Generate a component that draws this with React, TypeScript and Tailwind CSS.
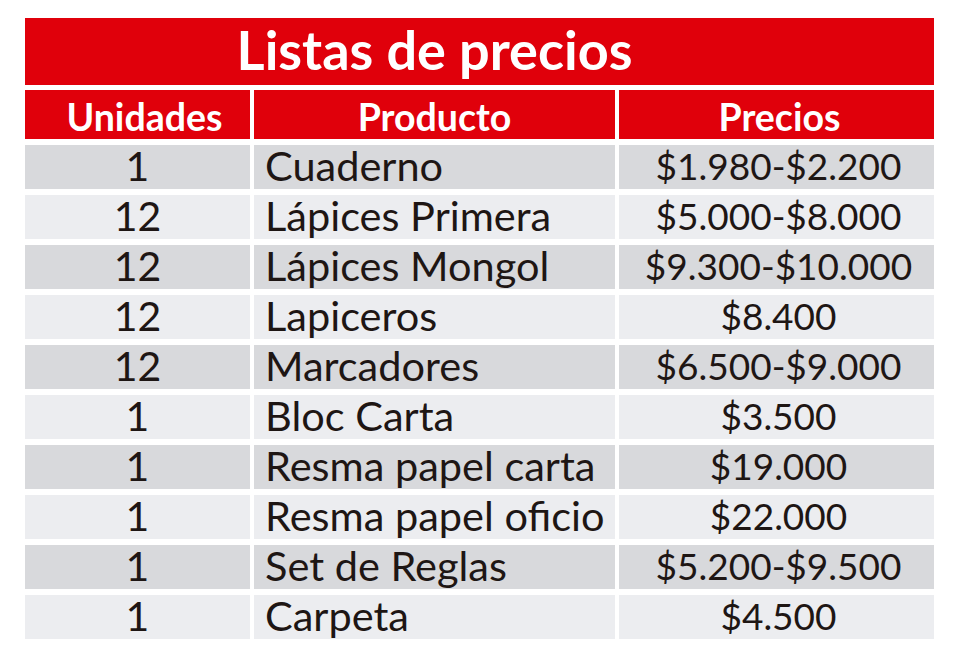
const rows: [string, string, string][] = [
  ["1", "Cuaderno", "$1.980-$2.200"],
  ["12", "Lápices Primera", "$5.000-$8.000"],
  ["12", "Lápices Mongol", "$9.300-$10.000"],
  ["12", "Lapiceros", "$8.400"],
  ["12", "Marcadores", "$6.500-$9.000"],
  ["1", "Bloc Carta", "$3.500"],
  ["1", "Resma papel carta", "$19.000"],
  ["1", "Resma papel oficio", "$22.000"],
  ["1", "Set de Reglas", "$5.200-$9.500"],
  ["1", "Carpeta", "$4.500"],
];

export default function App() {
  return (
    <div className="w-[960px] h-[657px] bg-white pt-[18px] pl-[25px] font-['Lato',sans-serif]">
      <div className="w-[909px] flex flex-col">
        {/* Title */}
        <div className="h-[67px] bg-[#e0000b] flex items-center justify-center pr-[90px] pb-[4px] text-white font-bold text-[54px] leading-none">
          Listas de precios
        </div>

        {/* Header */}
        <div className="mt-[5px] h-[49px] grid grid-cols-[225px_361px_315px] gap-x-[4px] text-white font-bold text-[37.5px] leading-none">
          <div className="bg-[#e0000b] flex items-center justify-center pt-[4px] pl-[14px]">Unidades</div>
          <div className="bg-[#e0000b] flex items-center justify-center pt-[4px]">Producto</div>
          <div className="bg-[#e0000b] flex items-center justify-center pt-[4px] pl-[6px]">Precios</div>
        </div>

        {/* Rows */}
        <div className="mt-[6px] flex flex-col gap-y-[7px] text-[#1e1614] leading-none">
          {rows.map(([qty, name, price], i) => {
            const bg = i % 2 === 0 ? "bg-[#d8d9dc]" : "bg-[#ecedf0]";
            return (
              <div key={name} className="h-[43px] grid grid-cols-[225px_361px_315px] gap-x-[4px]">
                <div className={`${bg} flex items-center justify-center pb-[2px] text-[41px]`}>{qty}</div>
                <div className={`${bg} flex items-center pl-[11px] pb-[2px] whitespace-nowrap text-[41.5px]`}>
                  {name}
                </div>
                <div className={`${bg} flex items-center justify-center pl-[4px] pb-[2px] whitespace-nowrap text-[37px]`}>
                  {price}
                </div>
              </div>
            );
          })}
        </div>
      </div>
    </div>
  );
}
